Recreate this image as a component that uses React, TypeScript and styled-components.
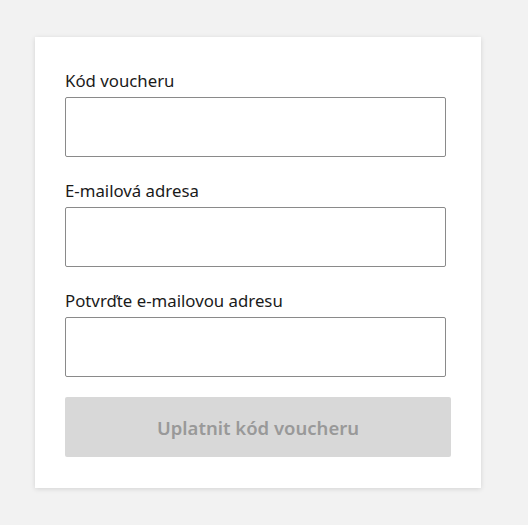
import React from 'react';
import styled, { createGlobalStyle } from 'styled-components';

const GlobalStyle = createGlobalStyle`
  html, body {
    margin: 0;
    padding: 0;
    background: #f2f2f2;
  }
  body {
    font-family: 'Noto Sans', 'Open Sans', sans-serif;
  }
`;

const Page = styled.div`
  padding: 37px 0 0 35px;
  width: 528px;
  height: 525px;
  box-sizing: border-box;
`;

const Card = styled.form`
  width: 446px;
  box-sizing: border-box;
  background: #fff;
  padding: 30px 30px 31px;
  box-shadow: 0 1px 5px rgba(0, 0, 0, 0.13);
  display: flex;
  flex-direction: column;
`;

const Field = styled.div`
  display: flex;
  flex-direction: column;
  margin-bottom: 20px;
`;

const Label = styled.label`
  font-size: 16.8px;
  line-height: 24px;
  padding-top: 2px;
  margin-bottom: 4px;
  color: #1a1a1a;
`;

const Input = styled.input`
  width: 381px;
  height: 60px;
  box-sizing: border-box;
  border: 1px solid #8a8a8a;
  border-radius: 2px;
  padding: 0 10px;
  font-family: inherit;
  font-size: 16px;
  background: #fff;
  outline: none;
`;

const Submit = styled.button`
  width: 386px;
  height: 60px;
  border: none;
  border-radius: 2px;
  background: #d8d8d8;
  color: #999999;
  font-family: inherit;
  font-size: 18.5px;
  font-weight: 600;
  cursor: default;
`;

const fields = [
  { id: 'code', label: 'Kód voucheru' },
  { id: 'email', label: 'E-mailová adresa' },
  { id: 'confirm', label: 'Potvrďte e-mailovou adresu' },
];

export default function App() {
  return (
    <>
      <GlobalStyle />
      <Page>
        <Card onSubmit={(e) => e.preventDefault()}>
          {fields.map((f) => (
            <Field key={f.id}>
              <Label htmlFor={f.id}>{f.label}</Label>
              <Input id={f.id} type="text" />
            </Field>
          ))}
          <Submit type="submit" disabled>
            Uplatnit kód voucheru
          </Submit>
        </Card>
      </Page>
    </>
  );
}
